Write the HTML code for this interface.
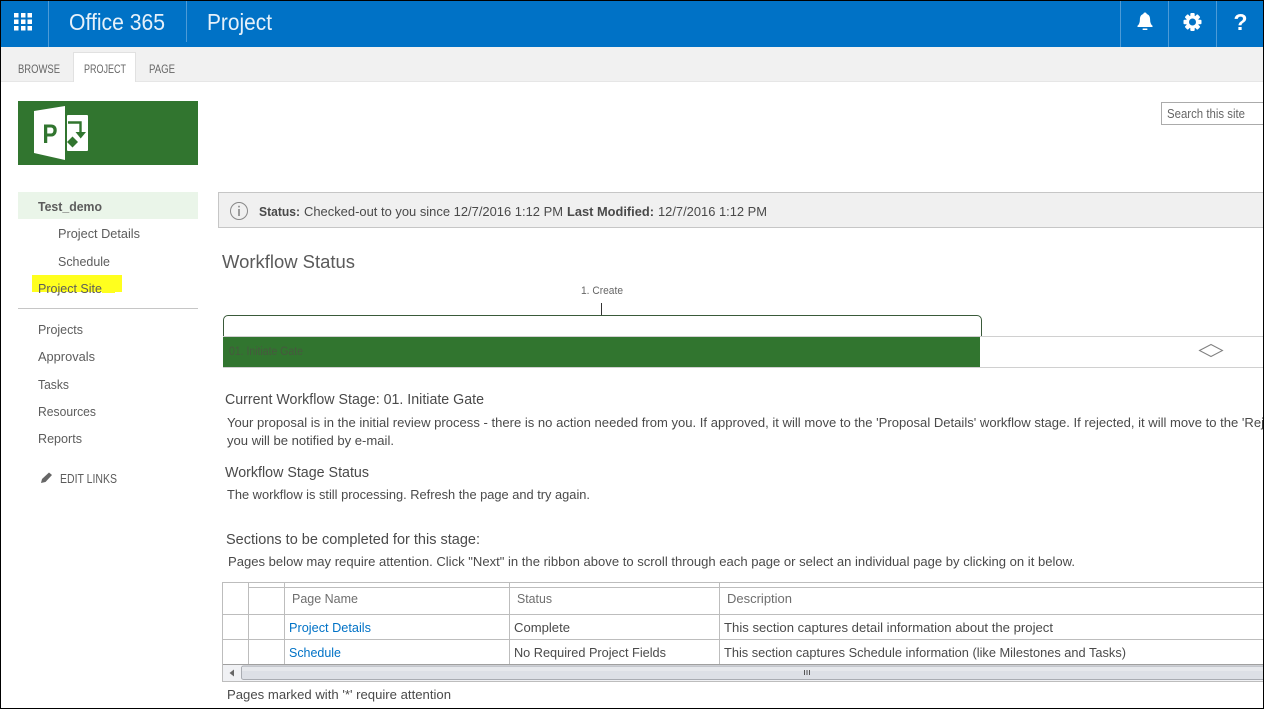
<!DOCTYPE html>
<html><head><meta charset="utf-8"><title>Project</title>
<style>
html,body{margin:0;padding:0;background:#fff;width:1264px;height:709px;overflow:hidden}
svg{display:block}
text{font-family:"Liberation Sans",sans-serif;font-size:13px;fill:#4a4a4a;white-space:pre}
.nav{fill:#5c5c5c}
.th{fill:#6e6e6e}
.l{fill:#0072c6}
.rib{font-size:12px;fill:#666}
</style></head><body>
<svg width="1264" height="709" viewBox="0 0 1264 709" xmlns="http://www.w3.org/2000/svg">
<rect width="1264" height="709" fill="#fff"/>
<!-- top bar -->
<rect x="0" y="0" width="1264" height="47" fill="#0072c6"/>
<g fill="#fff">
<rect x="14" y="13" width="4.500" height="4.500"/><rect x="21" y="13" width="4.500" height="4.500"/><rect x="27.500" y="13" width="4.500" height="4.500"/>
<rect x="14" y="19.500" width="4.500" height="4.500"/><rect x="21" y="19.500" width="4.500" height="4.500"/><rect x="27.500" y="19.500" width="4.500" height="4.500"/>
<rect x="14" y="26" width="4.500" height="4.500"/><rect x="21" y="26" width="4.500" height="4.500"/><rect x="27.500" y="26" width="4.500" height="4.500"/>
</g>
<g fill="#4d9bd7">
<rect x="48" y="1" width="1" height="46"/><rect x="186" y="1" width="1" height="41"/>
<rect x="1120" y="1" width="1" height="46"/><rect x="1168" y="1" width="1" height="46"/><rect x="1216" y="1" width="1" height="46"/>
</g>
<text x="69" y="30" textLength="96" lengthAdjust="spacingAndGlyphs" style="font-size:23px;fill:#e6f1fa">Office 365</text>
<text x="207" y="30" textLength="65" lengthAdjust="spacingAndGlyphs" style="font-size:23px;fill:#e6f1fa">Project</text>
<!-- bell -->
<path d="M1145 12.500c1 0 1.600.6 1.700 1.500 2.600.8 3.400 3 3.400 5.500 0 3 .8 5 2.400 6.300v1.200h-15v-1.200c1.600-1.300 2.400-3.300 2.400-6.300 0-2.500.8-4.700 3.400-5.500.1-.9.700-1.500 1.700-1.500z" fill="#fff"/>
<rect x="1142.500" y="28.500" width="5" height="1.500" rx=".7" fill="#fff"/>
<!-- gear -->
<g transform="translate(1192.500 22)">
<g fill="#fff"><rect x="-2.200" y="-9" width="4.400" height="18" rx="1"/><rect x="-2.200" y="-9" width="4.400" height="18" rx="1" transform="rotate(45)"/><rect x="-2.200" y="-9" width="4.400" height="18" rx="1" transform="rotate(90)"/><rect x="-2.200" y="-9" width="4.400" height="18" rx="1" transform="rotate(135)"/></g>
<circle r="6.400" fill="#fff"/><circle r="3.500" fill="#0072c6"/>
</g>
<text x="1233.500" y="30" style="font-size:23px;font-weight:bold;fill:#fff" textLength="14" lengthAdjust="spacingAndGlyphs">?</text>
<!-- ribbon -->
<rect x="0" y="47" width="1264" height="34" fill="#f1f1f1"/>
<rect x="0" y="81" width="1264" height="1" fill="#e6e6e6"/>
<rect x="73" y="52" width="63" height="30" fill="#fff"/>
<path d="M73.500 82V52.500H135.500V82" fill="none" stroke="#e1e1e1"/>
<text class="rib" x="18" y="73" textLength="42" lengthAdjust="spacingAndGlyphs">BROWSE</text>
<text class="rib" x="84" y="73" textLength="42" lengthAdjust="spacingAndGlyphs">PROJECT</text>
<text class="rib" x="149" y="73" textLength="26" lengthAdjust="spacingAndGlyphs">PAGE</text>
<!-- logo -->
<rect x="18" y="101" width="180" height="64" fill="#31752f"/>
<path d="M34 111L65 106V160L34 153z" fill="#fff"/>
<text x="42.500" y="143" textLength="15" lengthAdjust="spacingAndGlyphs" style="font-size:27px;font-weight:bold;fill:#31752f">P</text>
<rect x="67" y="115" width="21" height="36" rx="1" fill="#fff"/>
<path d="M68 122.500H80.500V133" fill="none" stroke="#31752f" stroke-width="2.400"/>
<path d="M75.500 132H86L80.700 138.500z" fill="#31752f"/>
<path d="M72.500 136.500L78 142L72.500 147.500L67 142z" fill="#31752f"/>
<!-- search -->
<rect x="1161.500" y="102.500" width="110" height="22" fill="#fff" stroke="#ababab"/>
<text x="1167" y="118" textLength="78" lengthAdjust="spacingAndGlyphs" style="font-size:12.500px;fill:#666">Search this site</text>
<!-- left nav -->
<rect x="18" y="192" width="180" height="27" fill="#eaf5e9"/>
<path d="M32 275H122V292H115V293H102V292H32z" fill="#ffff1e"/>
<text class="nav" x="38" y="211" textLength="64" lengthAdjust="spacingAndGlyphs" style="font-weight:bold">Test_demo</text>
<text class="nav" x="58" y="238" textLength="82" lengthAdjust="spacingAndGlyphs">Project Details</text>
<text class="nav" x="58" y="266" textLength="52" lengthAdjust="spacingAndGlyphs">Schedule</text>
<text class="nav" x="38" y="293" textLength="64" lengthAdjust="spacingAndGlyphs">Project Site</text>
<rect x="18" y="308" width="180" height="1" fill="#c6c6c6"/>
<text class="nav" x="38" y="334" textLength="45" lengthAdjust="spacingAndGlyphs">Projects</text>
<text class="nav" x="38" y="361" textLength="57" lengthAdjust="spacingAndGlyphs">Approvals</text>
<text class="nav" x="38" y="389" textLength="31" lengthAdjust="spacingAndGlyphs">Tasks</text>
<text class="nav" x="38" y="416" textLength="58" lengthAdjust="spacingAndGlyphs">Resources</text>
<text class="nav" x="38" y="443" textLength="44" lengthAdjust="spacingAndGlyphs">Reports</text>
<path d="M41 483L42 479L49 472.500L52 475L45.500 482z" fill="#666"/>
<text class="nav" x="60" y="483" textLength="57" lengthAdjust="spacingAndGlyphs" style="font-size:12.500px">EDIT LINKS</text>
<!-- status bar -->
<rect x="218.500" y="192.500" width="1050" height="35" fill="#f0f0f0" stroke="#c6c6c6"/>
<circle cx="239" cy="211" r="8.500" fill="none" stroke="#888" stroke-width="1"/>
<rect x="238.300" y="209" width="1.400" height="7" fill="#777"/><rect x="238.300" y="205.800" width="1.400" height="1.600" fill="#777"/>
<text x="259" y="216" textLength="41" lengthAdjust="spacingAndGlyphs" style="font-weight:bold">Status:</text>
<text x="304" y="216" textLength="259" lengthAdjust="spacingAndGlyphs">Checked-out to you since 12/7/2016 1:12 PM</text>
<text x="567" y="216" textLength="87" lengthAdjust="spacingAndGlyphs" style="font-weight:bold">Last Modified:</text>
<text x="658" y="216" textLength="109" lengthAdjust="spacingAndGlyphs">12/7/2016 1:12 PM</text>
<text x="222" y="268" textLength="133" lengthAdjust="spacingAndGlyphs" style="font-size:18.500px;fill:#5a5a5a">Workflow Status</text>
<!-- workflow -->
<text x="581" y="294" textLength="42" lengthAdjust="spacingAndGlyphs" style="font-size:11px;fill:#666">1. Create</text>
<rect x="601" y="303" width="1" height="12" fill="#333"/>
<path d="M223.500 336V320a4.500 4.500 0 0 1 4.500-4.500H977a4.500 4.500 0 0 1 4.500 4.500V336" fill="none" stroke="#3a5a3a"/>
<rect x="223" y="336" width="1041" height="1" fill="#d0d0d0"/>
<rect x="223" y="367" width="1041" height="1" fill="#d0d0d0"/>
<rect x="223" y="337" width="757" height="30" fill="#31752f"/>
<text x="229" y="355" textLength="74" lengthAdjust="spacingAndGlyphs" style="font-size:11.500px;fill:#47583f">01. Initiate Gate</text>
<path d="M1199.500 350.500L1211 344.500L1222.500 350.500L1211 356.500z" fill="#fff" stroke="#808080"/>
<!-- body -->
<text x="225" y="404" textLength="259" lengthAdjust="spacingAndGlyphs" style="font-size:14.500px">Current Workflow Stage: 01. Initiate Gate</text>
<text x="227" y="427" textLength="1037" lengthAdjust="spacingAndGlyphs">Your proposal is in the initial review process - there is no action needed from you. If approved, it will move to the 'Proposal Details' workflow stage. If rejected, it will move to the 'Rej</text>
<text x="227" y="445" textLength="167" lengthAdjust="spacingAndGlyphs">you will be notified by e-mail.</text>
<text x="225" y="477" textLength="144" lengthAdjust="spacingAndGlyphs" style="font-size:14.500px">Workflow Stage Status</text>
<text x="227" y="499" textLength="363" lengthAdjust="spacingAndGlyphs">The workflow is still processing. Refresh the page and try again.</text>
<text x="226" y="544" textLength="254" lengthAdjust="spacingAndGlyphs" style="font-size:14.500px">Sections to be completed for this stage:</text>
<text x="228" y="566" textLength="847" lengthAdjust="spacingAndGlyphs">Pages below may require attention. Click "Next" in the ribbon above to scroll through each page or select an individual page by clicking on it below.</text>
<!-- table -->
<g fill="none" stroke="#bdbdbd">
<path d="M1264 582.500H222.500V681.500H1264"/>
<path d="M248 587.500H1264"/>
<path d="M223 614.500H1264"/>
<path d="M223 639.500H1264"/>
<path d="M248.500 582V665M284.500 582V665M509.500 582V665M719.500 582V665"/>
</g>
<text class="th" x="292" y="603" textLength="66" lengthAdjust="spacingAndGlyphs">Page Name</text>
<text class="th" x="517" y="603" textLength="35" lengthAdjust="spacingAndGlyphs">Status</text>
<text class="th" x="727" y="603" textLength="65" lengthAdjust="spacingAndGlyphs">Description</text>
<text class="l" x="289" y="632" textLength="82" lengthAdjust="spacingAndGlyphs">Project Details</text>
<text class="l" x="289" y="657" textLength="52" lengthAdjust="spacingAndGlyphs">Schedule</text>
<text x="514" y="632" textLength="56" lengthAdjust="spacingAndGlyphs">Complete</text>
<text x="514" y="657" textLength="152" lengthAdjust="spacingAndGlyphs">No Required Project Fields</text>
<text x="724" y="632" textLength="329" lengthAdjust="spacingAndGlyphs">This section captures detail information about the project</text>
<text x="724" y="657" textLength="402" lengthAdjust="spacingAndGlyphs">This section captures Schedule information (like Milestones and Tasks)</text>
<!-- scrollbar -->
<rect x="223" y="665" width="1041" height="16" fill="#f0f1f4"/>
<rect x="223" y="664" width="1041" height="1" fill="#a0a0a0"/>
<rect x="241.500" y="666" width="1030" height="13.500" rx="2" fill="#dde0e6" stroke="#a9acb2"/>
<rect x="242" y="667" width="1022" height="4" fill="#e6e8ec"/>
<path d="M234 669.500V676.500L229.500 673z" fill="#666"/>
<rect x="804" y="670" width="1" height="5" fill="#555"/><rect x="806.500" y="670" width="1" height="5" fill="#555"/><rect x="809" y="670" width="1" height="5" fill="#555"/>
<text x="227" y="699" textLength="224" lengthAdjust="spacingAndGlyphs">Pages marked with '*' require attention</text>
<!-- screenshot frame -->
<rect x="0" y="0" width="1264" height="1" fill="#000"/>
<rect x="0" y="708" width="1264" height="1" fill="#000"/>
<rect x="0" y="0" width="1" height="709" fill="#000"/>
<rect x="1263" y="0" width="1" height="709" fill="#000"/>
</svg>
</body></html>
